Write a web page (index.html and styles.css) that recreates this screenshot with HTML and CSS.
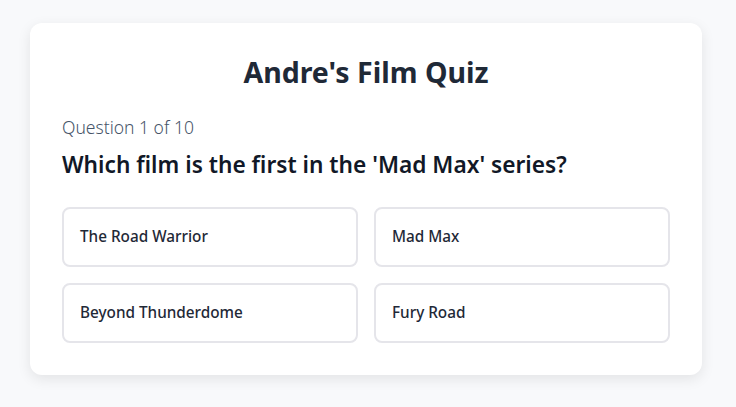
FILE: index.html
```html
<!DOCTYPE html>
<html lang="en">
<head>
<meta charset="utf-8">
<title>Andre's Film Quiz</title>
<link rel="stylesheet" href="styles.css">
</head>
<body>
<main class="page">
  <section class="card">
    <h1 class="title">Andre's Film Quiz</h1>
    <p class="counter">Question 1 of 10</p>
    <h2 class="question">Which film is the first in the 'Mad Max' series?</h2>
    <div class="options">
      <button class="option">The Road Warrior</button>
      <button class="option">Mad Max</button>
      <button class="option">Beyond Thunderdome</button>
      <button class="option">Fury Road</button>
    </div>
  </section>
</main>
</body>
</html>
```
FILE: styles.css
```css
* { box-sizing: border-box; }
html, body {
  margin: 0;
  padding: 0;
  background: #f8f9fb;
  font-family: "Noto Sans", "DejaVu Sans", sans-serif;
  color: #1f2937;
}
.page {
  padding: 23px 34px 32px 30px;
}
.card {
  background: #ffffff;
  border-radius: 12px;
  box-shadow: 0 4px 14px rgba(0, 0, 0, 0.09);
  padding: 32px;
}
.title {
  margin: 0 0 24px;
  text-align: center;
  font-size: 28.5px;
  line-height: 34px;
  font-weight: 700;
  color: #1f2937;
}
.counter {
  margin: 0 0 8px;
  font-size: 17.5px;
  line-height: 28px;
  font-weight: 300;
  color: #475569;
}
.question {
  margin: 0 0 26px;
  font-size: 22.7px;
  line-height: 32px;
  font-weight: 600;
  color: #111827;
}
.options {
  display: grid;
  grid-template-columns: 1fr 1fr;
  gap: 16px;
}
.option {
  font-family: inherit;
  text-align: left;
  background: #ffffff;
  border: 2px solid #e5e5ea;
  border-radius: 8px;
  padding: 15px 16px 17px;
  font-size: 15.3px;
  line-height: 24px;
  font-weight: 500;
  color: #1f2937;
}
```
